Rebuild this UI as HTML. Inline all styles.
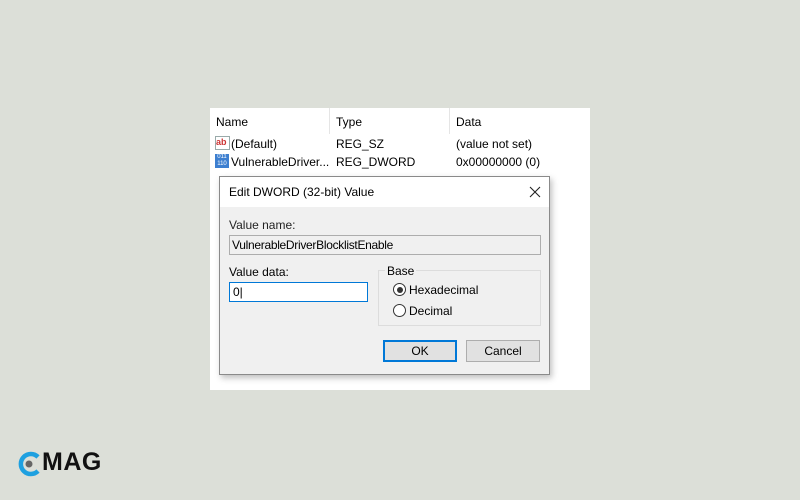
<!DOCTYPE html>
<html><head><style>
body{margin:0;width:800px;height:500px;background:#dcdfd8;position:relative;overflow:hidden;font-family:"Liberation Sans",sans-serif;font-size:12px;color:#000}
.a{position:absolute}
.panel{left:210px;top:108px;width:380px;height:282px;background:#fff}
.t{position:absolute;white-space:nowrap}
.dlg{left:219px;top:176px;width:329px;height:197px;background:#f0f0f0;border:1px solid #8a8a8a;box-shadow:2px 3px 6px rgba(0,0,0,.25)}
.tb{position:absolute;left:0;top:0;width:329px;height:30px;background:#fff}
.box{position:absolute;box-sizing:border-box}
</style></head><body>
<div class="a panel">
 <div class="t" style="left:6px;top:7px">Name</div>
 <div class="t" style="left:126px;top:7px">Type</div>
 <div class="t" style="left:246px;top:7px">Data</div>
 <div class="a" style="left:119px;top:0;width:1px;height:26px;background:#e5e5e5"></div>
 <div class="a" style="left:239px;top:0;width:1px;height:26px;background:#e5e5e5"></div>
 <div class="a" style="left:5px;top:28px;width:13px;height:12px;border:1px solid #9aa;background:#fff;font-size:9px;color:#c33;font-weight:bold;line-height:11px">ab</div>
 <div class="t" style="left:21px;top:29px">(Default)</div>
 <div class="t" style="left:126px;top:29px">REG_SZ</div>
 <div class="t" style="left:246px;top:29px">(value not set)</div>
 <div class="a" style="left:5px;top:46px;width:14px;height:14px;background:#3d7fd0;color:#fff;font-size:6px;line-height:7px;text-align:center">011<br>110</div>
 <div class="t" style="left:21px;top:47px">VulnerableDriver...</div>
 <div class="t" style="left:126px;top:47px">REG_DWORD</div>
 <div class="t" style="left:246px;top:47px">0x00000000 (0)</div>
</div>
<div class="a dlg">
 <div class="tb"></div>
 <div class="t" style="left:9px;top:8px">Edit DWORD (32-bit) Value</div>
 <svg class="a" style="left:309px;top:9px" width="12" height="12" viewBox="0 0 12 12"><path d="M1 1L11 11M11 1L1 11" stroke="#222" stroke-width="1.1"/></svg>
 <div class="t" style="left:9px;top:41px;color:#222">Value name:</div>
 <div class="box" style="left:9px;top:58px;width:312px;height:20px;border:1px solid #adadad;background:#f0f0f0"></div>
 <div class="t" style="left:12px;top:61px;letter-spacing:-0.3px">VulnerableDriverBlocklistEnable</div>
 <div class="t" style="left:9px;top:88px">Value data:</div>
 <div class="box" style="left:9px;top:105px;width:139px;height:20px;border:1px solid #0078d7;background:#fff"></div>
 <div class="t" style="left:13px;top:108px">0|</div>
 <div class="box" style="left:158px;top:93px;width:163px;height:56px;border:1px solid #dcdcdc"></div>
 <div class="t" style="left:165px;top:87px;background:#f0f0f0;padding:0 2px">Base</div>
 <div class="box" style="left:173px;top:106px;width:13px;height:13px;border:1px solid #333;border-radius:50%;background:#fff"></div>
 <div class="a" style="left:176.5px;top:109.5px;width:6px;height:6px;border-radius:50%;background:#333"></div>
 <div class="t" style="left:189px;top:106px">Hexadecimal</div>
 <div class="box" style="left:173px;top:127px;width:13px;height:13px;border:1px solid #333;border-radius:50%;background:#fff"></div>
 <div class="t" style="left:189px;top:127px">Decimal</div>
 <div class="box" style="left:163px;top:163px;width:74px;height:22px;border:2px solid #0078d7;background:#e1e1e1;text-align:center;line-height:18px">OK</div>
 <div class="box" style="left:246px;top:163px;width:74px;height:22px;border:1px solid #adadad;background:#e1e1e1;text-align:center;line-height:20px">Cancel</div>
</div>
<svg class="a" style="left:15px;top:449px" width="30" height="30" viewBox="0 0 30 30">
 <path d="M23 8 A10 10 0 1 0 23 22" fill="none" stroke="#1ea0e0" stroke-width="4.5"/>
 <circle cx="14" cy="15" r="3.5" fill="#666"/>
</svg>
<div class="t" style="left:42px;top:448px;font-size:25px;font-weight:bold;color:#111;letter-spacing:0.5px">MAG</div>
</body></html>
